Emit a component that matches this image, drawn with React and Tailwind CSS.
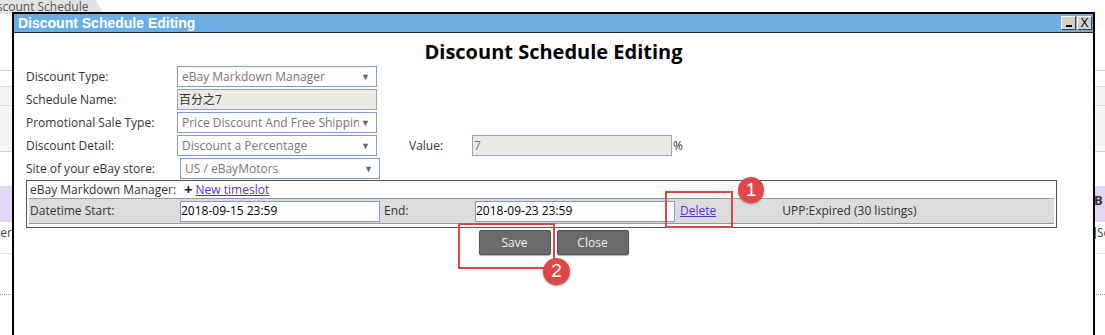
import React from "react"

const sel =
  "h-[21px] w-[200px] border border-[#7d9bd0] bg-white flex items-center justify-between gap-[2px] pl-[4px] pr-[6px] text-[#777] whitespace-nowrap overflow-hidden"

function Arrow() {
  return <span className="text-[9px] text-[#666] leading-none shrink-0">▼</span>
}

function FormRow({ label, width = "w-[151px]", children }) {
  return (
    <div className="flex items-center h-[21px]">
      <div className={`${width} shrink-0 text-[#333]`}>{label}</div>
      {children}
    </div>
  )
}

function Background() {
  return (
    <div className="flex flex-col w-full font-['Open_Sans',sans-serif] text-[12px] text-[#444]">
      <div className="flex h-[14px]">
        <div className="bg-[#e3e3e3] h-[14px] pr-[8px] -ml-[15px] leading-[14px] text-[#555] whitespace-nowrap">
          Discount Schedule
        </div>
        <div className="w-0 h-0 border-b-[14px] border-b-[#e3e3e3] border-r-[7px] border-r-transparent"></div>
      </div>
      <div className="h-[56px]"></div>
      <div className="h-[16px] border-t border-[#c8c8c8]"></div>
      <div className="h-[19px] border-t border-[#dcdcdc] bg-[#f4f4f4]"></div>
      <div className="h-[46px] border-t border-[#dcdcdc] bg-[#f4f4f4]"></div>
      <div className="h-[35px] border-t border-[#cfcfcf]"></div>
      <div className="h-[35px] bg-[#e3d5f6] flex justify-end items-center pr-[2px]">
        <span className="font-bold text-[#333] text-[13px] -mt-[6px] w-[9px]">B</span>
      </div>
      <div className="h-[32px] border-t border-[#dcdcdc] flex justify-between items-start pt-[2px]">
        <div className="w-[12px] overflow-hidden flex justify-end">
          <span className="whitespace-nowrap">Manager</span>
        </div>
        <div className="w-[10px] overflow-hidden flex items-center">
          <span className="w-[1px] h-[12px] bg-[#3a6fd0] mr-[1px] shrink-0"></span>
          <span className="whitespace-nowrap">Sch</span>
        </div>
      </div>
      <div className="h-[41px] border-t border-[#e0e0e0]"></div>
      <div className="h-[40px] border-t border-dotted border-[#999]"></div>
    </div>
  )
}

function TitleButton({ children }) {
  return (
    <div className="w-[15px] h-[14px] bg-[#d4d0c8] border border-t-white border-l-white border-b-[#404040] border-r-[#404040] flex items-center justify-center text-black text-[12px] leading-none font-['Liberation_Sans',sans-serif]">
      {children}
    </div>
  )
}

function Dialog() {
  return (
    <div className="absolute left-[12px] top-[12px] w-[1083px] h-[340px] border-2 border-black bg-white flex flex-col">
      <div className="h-[19px] bg-[#6aaee4] border-b border-[#222] flex items-center justify-between pl-[4px] pr-[1px]">
        <span className="text-white font-bold text-[14px] font-['Liberation_Sans',sans-serif] leading-none">
          Discount Schedule Editing
        </span>
        <div className="flex gap-[1px]">
          <TitleButton>
            <span className="block w-[6px] h-[2px] bg-black mt-[6px]"></span>
          </TitleButton>
          <TitleButton>X</TitleButton>
        </div>
      </div>
      <div className="flex flex-col pl-[12px] pr-[36px] pt-[5px] font-['Open_Sans',sans-serif] text-[12px]">
        <div className="h-[27px] leading-[27px] text-center font-bold text-[20px] text-black pl-[24px]">
          Discount Schedule Editing
        </div>
        <div className="flex flex-col gap-[2px] mt-[1px]">
          <FormRow label="Discount Type:">
            <div className={sel}>
              <span>eBay Markdown Manager</span>
              <Arrow />
            </div>
          </FormRow>
          <FormRow label="Schedule Name:">
            <div className="h-[21px] w-[200px] border border-[#8ca2c8] bg-[#ebebe4] flex items-center pl-[1px] text-[#333] font-['Open_Sans','Noto_Sans_CJK_SC',sans-serif]">
              百分之7
            </div>
          </FormRow>
          <FormRow label="Promotional Sale Type:">
            <div className={sel}>
              <span className="flex-1 min-w-0 overflow-hidden">Price Discount And Free Shipping</span>
              <Arrow />
            </div>
          </FormRow>
          <FormRow label="Discount Detail:">
            <div className={sel}>
              <span>Discount a Percentage</span>
              <Arrow />
            </div>
            <div className="w-[63px] ml-[32px] text-[#333]">Value:</div>
            <div className="h-[21px] w-[200px] border border-[#8ca2c8] bg-[#ebebe4] flex items-center pl-[1px] text-[#777]">
              7
            </div>
            <span className="ml-[1px] text-[#333]">%</span>
          </FormRow>
          <FormRow label="Site of your eBay store:" width="w-[154px]">
            <div className={sel}>
              <span>US / eBayMotors</span>
              <Arrow />
            </div>
          </FormRow>
        </div>
        <div className="mt-[1px] border border-[#555] px-[2px] pb-[3px] w-[1031px]">
          <div className="h-[17px] flex items-center pl-[1px] text-[#333] whitespace-nowrap">
            <span className="w-[154px]">eBay Markdown Manager:</span>
            <span className="font-bold text-[15px] leading-none mr-[3px] text-[#222]">+</span>
            <span className="text-[#5530d8] underline">New timeslot</span>
          </div>
          <div className="h-[26px] bg-[#dcdcdc] border-y border-[#999] flex items-center pl-[1px] text-[#333] whitespace-nowrap">
            <span className="w-[150px] shrink-0">Datetime Start:</span>
            <div className="h-[21px] w-[200px] border border-[#7d9bd0] bg-white flex items-center text-black">
              2018-09-15 23:59
            </div>
            <span className="w-[91px] ml-[4px] shrink-0">End:</span>
            <div className="h-[21px] w-[200px] border border-[#7d9bd0] bg-white flex items-center text-black">
              2018-09-23 23:59
            </div>
            <span className="ml-[5px] text-[#5530d8] underline">Delete</span>
            <span className="ml-[66px]">UPP:Expired (30 listings)</span>
          </div>
        </div>
        <div className="flex justify-center gap-[6px] mt-[2px] pl-[24px]">
          <button className="w-[72px] h-[25px] bg-[#6b6b6b] border border-[#555] rounded-[2px] text-[#eee] text-[12px] shadow-[0_1px_1px_rgba(0,0,0,0.3)]">
            Save
          </button>
          <button className="w-[72px] h-[25px] bg-[#6b6b6b] border border-[#555] rounded-[2px] text-[#eee] text-[12px] shadow-[0_1px_1px_rgba(0,0,0,0.3)]">
            Close
          </button>
        </div>
      </div>
    </div>
  )
}

export default function App() {
  return (
    <div className="relative w-[1105px] h-[335px] overflow-hidden bg-white">
      <Background />
      <Dialog />
      <div className="absolute left-[665px] top-[191px] w-[68px] h-[37px] border-2 border-[#e04442]"></div>
      <div className="absolute left-[738px] top-[177px] w-[26px] h-[26px] rounded-full bg-[#e04848] shadow-[0_1px_2px_rgba(0,0,0,0.4)] flex items-center justify-center text-white text-[19px] font-['Liberation_Sans',sans-serif]">
        1
      </div>
      <div className="absolute left-[458px] top-[223px] w-[97px] h-[46px] border-2 border-[#e04442]"></div>
      <div className="absolute left-[543px] top-[258px] w-[27px] h-[27px] rounded-full bg-[#e04848] shadow-[0_1px_2px_rgba(0,0,0,0.4)] flex items-center justify-center text-white text-[19px] font-['Liberation_Sans',sans-serif]">
        2
      </div>
    </div>
  )
}
